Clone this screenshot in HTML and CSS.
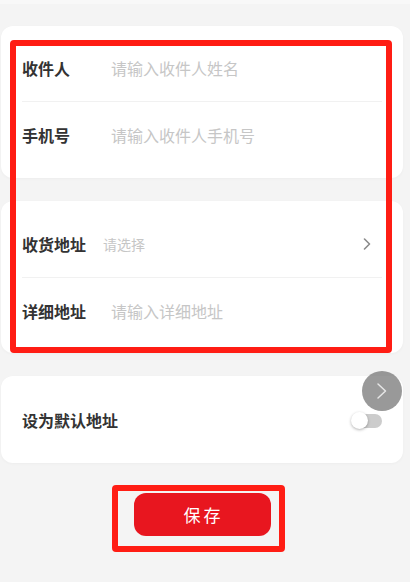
FILE: index.html
```html
<!DOCTYPE html>
<html lang="zh-CN">
<head>
<meta charset="utf-8">
<title>编辑地址</title>
<link rel="stylesheet" href="styles.css">
</head>
<body>
<div class="page">
  <div class="topstrip"></div>

  <div class="card card-contact">
    <div class="row row-first">
      <span class="label">收件人</span>
      <span class="placeholder">请输入收件人姓名</span>
    </div>
    <div class="divider"></div>
    <div class="row row-second">
      <span class="label">手机号</span>
      <span class="placeholder">请输入收件人手机号</span>
    </div>
  </div>

  <div class="card card-address">
    <div class="row row-addr">
      <span class="label label-tight">收货地址</span>
      <span class="placeholder placeholder-small">请选择</span>
      <svg class="chevron" width="8" height="12" viewBox="0 0 8 12">
        <path d="M1.5 1 L6.5 6 L1.5 11" fill="none" stroke="#8a8a8a" stroke-width="1.6" stroke-linecap="round" stroke-linejoin="round"/>
      </svg>
    </div>
    <div class="divider"></div>
    <div class="row row-addr">
      <span class="label">详细地址</span>
      <span class="placeholder">请输入详细地址</span>
    </div>
  </div>

  <div class="card card-default">
    <div class="row row-default">
      <span class="label">设为默认地址</span>
      <span class="switch"><span class="switch-knob"></span></span>
    </div>
  </div>

  <div class="actions">
    <button class="save-btn">保存</button>
  </div>

  <div class="float-btn">
    <svg width="12" height="18" viewBox="0 0 12 18">
      <path d="M2 2 L9.5 9 L2 16" fill="none" stroke="#e6e6e6" stroke-width="1.5" stroke-linecap="round" stroke-linejoin="round"/>
    </svg>
  </div>

  <div class="mark mark-form"></div>
  <div class="mark mark-save"></div>
</div>
</body>
</html>
```

FILE: styles.css
```css
html, body {
  margin: 0;
  padding: 0;
}

body {
  background: #f4f4f4;
  font-family: "Noto Sans CJK SC", "Noto Sans", sans-serif;
  width: 410px;
  height: 582px;
  overflow: hidden;
}

.page {
  position: relative;
  width: 410px;
  height: 582px;
}

.topstrip {
  height: 4px;
  background: #f8f8f8;
}

.card {
  background: #ffffff;
  border-radius: 12px;
  margin: 0 7px 0 1px;
  padding: 0 21px;
  box-shadow: 0 1px 3px rgba(0, 0, 0, 0.03);
}

.card-contact {
  margin-top: 22px;
  padding-top: 8px;
  padding-bottom: 11px;
}

.card-address {
  margin-top: 23px;
  padding-top: 10px;
  padding-bottom: 9px;
}

.card-default {
  margin-top: 23px;
}

.row {
  display: flex;
  align-items: center;
}

.row-first {
  height: 67px;
}

.row-second {
  height: 65px;
}

.row-addr {
  height: 66px;
}

.row-default {
  height: 87px;
  justify-content: space-between;
}

.divider {
  height: 1px;
  background: #f1f1f1;
}

.label {
  font-size: 16px;
  font-weight: 700;
  color: #333333;
  min-width: 89px;
  line-height: 20px;
}

.label-tight {
  min-width: 0;
  margin-right: 17px;
}

.placeholder {
  font-size: 16px;
  color: #c6c6c6;
  line-height: 20px;
}

.placeholder-small {
  font-size: 14px;
}

.chevron {
  margin-left: auto;
  margin-right: 11px;
}

.switch {
  position: relative;
  width: 27px;
  height: 14px;
  border-radius: 7px;
  background: #cccccc;
  margin-top: 2px;
}

.switch-knob {
  position: absolute;
  left: -4px;
  top: -2px;
  width: 17px;
  height: 17px;
  border-radius: 50%;
  background: #ffffff;
  box-shadow: 0 1px 3px rgba(0, 0, 0, 0.3);
}

.actions {
  display: flex;
  justify-content: center;
  margin: 30px 7px 0 1px;
}

.save-btn {
  width: 137px;
  height: 43px;
  border: none;
  border-radius: 12px;
  background: #e8161f;
  color: #ffffff;
  font-family: "Noto Sans CJK SC", "Noto Sans", sans-serif;
  font-size: 17px;
  letter-spacing: 3px;
  text-indent: 3px;
  padding: 0;
}

.float-btn {
  position: absolute;
  left: 362px;
  top: 371px;
  width: 40px;
  height: 40px;
  border-radius: 50%;
  background: rgba(110, 110, 110, 0.7);
  display: flex;
  align-items: center;
  justify-content: center;
}

.mark {
  position: absolute;
  border: 6px solid #ff1d14;
  border-radius: 4px;
  box-sizing: border-box;
}

.mark-form {
  left: 10px;
  top: 40px;
  width: 382px;
  height: 313px;
}

.mark-save {
  left: 112px;
  top: 485px;
  width: 173px;
  height: 67px;
}
```
